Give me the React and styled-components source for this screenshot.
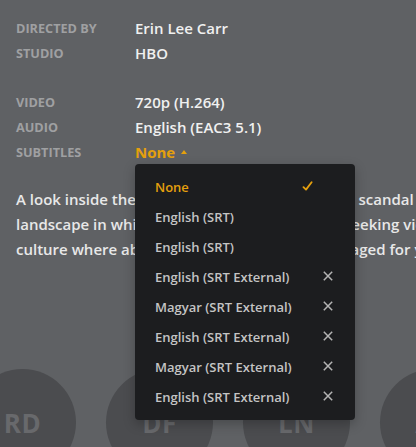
import React, { useState } from 'react';
import styled, { createGlobalStyle } from 'styled-components';

const GlobalStyle = createGlobalStyle`
    html, body {
        margin: 0;
        padding: 0;
        background: #5f6164;
        overflow: hidden;
    }
    body {
        font-family: "Open Sans", "Noto Sans", sans-serif;
        -webkit-font-smoothing: antialiased;
    }
`;

const tracks = [
    { id: 0, name: 'None' },
    { id: 1, name: 'English (SRT)' },
    { id: 2, name: 'English (SRT)' },
    { id: 3, name: 'English (SRT External)', external: true },
    { id: 4, name: 'Magyar (SRT External)', external: true },
    { id: 5, name: 'English (SRT External)', external: true },
    { id: 6, name: 'Magyar (SRT External)', external: true },
    { id: 7, name: 'English (SRT External)', external: true },
];

const people = ['RD', 'DF', 'LN', 'AB'];

function CheckIcon() {
    return (
        <svg width="11" height="10" viewBox="0 0 11 10">
            <path d="M1.5 6.2 L4 8.6 L9.6 1.2" fill="none" stroke="#e5a00d" strokeWidth="1.8" strokeLinecap="round" strokeLinejoin="round" />
        </svg>
    );
}

function CloseIcon() {
    return (
        <svg width="10" height="10" viewBox="0 0 10 10">
            <path d="M0.8 0.8 L9.2 9.2 M9.2 0.8 L0.8 9.2" fill="none" stroke="#b4b4b4" strokeWidth="1.5" />
        </svg>
    );
}

export default function App() {
    const [selected, setSelected] = useState(0);

    return (
        <>
            <GlobalStyle />
            <Page>
                <InfoGrid>
                    <Label>Directed by</Label>
                    <Value>Erin Lee Carr</Value>
                    <Label>Studio</Label>
                    <Value>HBO</Value>
                </InfoGrid>
                <InfoGrid $spaced>
                    <Label>Video</Label>
                    <Value>720p (H.264)</Value>
                    <Label>Audio</Label>
                    <Value>English (EAC3 5.1)</Value>
                    <Label>Subtitles</Label>
                    <SubtitleCell>
                        <SubtitleToggle>
                            {tracks[selected].name}
                            <Caret />
                        </SubtitleToggle>
                        <Menu>
                            {tracks.map(track => (
                                <MenuItem key={track.id} onClick={() => setSelected(track.id)}>
                                    <ItemLabel $active={track.id === selected}>{track.name}</ItemLabel>
                                    <IconSlot $w={11}>{track.id === selected && <CheckIcon />}</IconSlot>
                                    <IconSlot $w={10}>{track.external && <CloseIcon />}</IconSlot>
                                </MenuItem>
                            ))}
                        </Menu>
                    </SubtitleCell>
                </InfoGrid>
                <Summary>
                    <Line>A look inside the USA Gymnastics sexual abuse scandal that shook the world,</Line>
                    <Line>landscape in which talented young gymnasts seeking victory were left unprotected,</Line>
                    <Line>culture where abuses were tolerated and managed for years by the adults around them.</Line>
                </Summary>
                <CastRow>
                    {people.map(p => (
                        <Avatar key={p}>{p}</Avatar>
                    ))}
                </CastRow>
            </Page>
        </>
    );
}

const Page = styled.main`
    width: 416px;
    height: 447px;
    padding: 16px 0 0 16px;
    box-sizing: border-box;
    overflow: hidden;
`;

const InfoGrid = styled.section`
    display: grid;
    grid-template-columns: 119px 1fr;
    grid-auto-rows: 25px;
    align-items: center;
    margin-top: ${props => (props.$spaced ? '24px' : '0')};
`;

const Label = styled.div`
    font-size: 12.7px;
    font-weight: 700;
    text-transform: uppercase;
    color: #9fa0a2;
    line-height: 25px;
`;

const Value = styled.div`
    font-size: 15px;
    font-weight: 600;
    color: #f0f0f0;
    line-height: 25px;
`;

const SubtitleCell = styled.div`
    position: relative;
    line-height: 25px;
`;

const SubtitleToggle = styled.button`
    display: inline-flex;
    align-items: center;
    gap: 6px;
    padding: 0;
    border: none;
    background: transparent;
    font-family: inherit;
    font-size: 15px;
    font-weight: 700;
    color: #e5a00d;
    line-height: 25px;
    cursor: pointer;
`;

const Caret = styled.span`
    width: 0;
    height: 0;
    border-left: 3.5px solid transparent;
    border-right: 3.5px solid transparent;
    border-bottom: 4px solid #e5a00d;
    margin-top: -1px;
`;

const Menu = styled.ul`
    position: absolute;
    top: 24px;
    left: 0;
    z-index: 10;
    width: 220px;
    margin: 0;
    padding: 8px 0;
    list-style: none;
    background: #1c1d1f;
    border-radius: 4px;
    box-shadow: 0 4px 12px rgba(0, 0, 0, 0.25);
`;

const MenuItem = styled.li`
    display: flex;
    align-items: center;
    gap: 10px;
    height: 30px;
    padding: 0 22px 0 20px;
    cursor: pointer;
`;

const ItemLabel = styled.span`
    flex: 1;
    font-size: 13px;
    font-weight: 600;
    color: ${props => (props.$active ? '#e5a00d' : '#c4c4c4')};
    white-space: nowrap;
`;

const IconSlot = styled.span`
    display: flex;
    align-items: center;
    justify-content: center;
    width: ${props => props.$w}px;
    margin-top: -2px;
`;

const Summary = styled.p`
    margin: 22px 0 0;
    font-size: 15px;
    font-weight: 600;
    color: #e8e8e8;
    line-height: 25px;
`;

const Line = styled.span`
    display: block;
    white-space: nowrap;
`;

const CastRow = styled.div`
    display: flex;
    gap: 30px;
    margin: 107px 0 0 -47px;
`;

const Avatar = styled.div`
    flex: none;
    width: 107px;
    height: 107px;
    border-radius: 50%;
    background: #4b4c4f;
    display: flex;
    align-items: center;
    justify-content: center;
    font-size: 26px;
    font-weight: 700;
    color: #68696c;
    letter-spacing: 0.5px;
`;
